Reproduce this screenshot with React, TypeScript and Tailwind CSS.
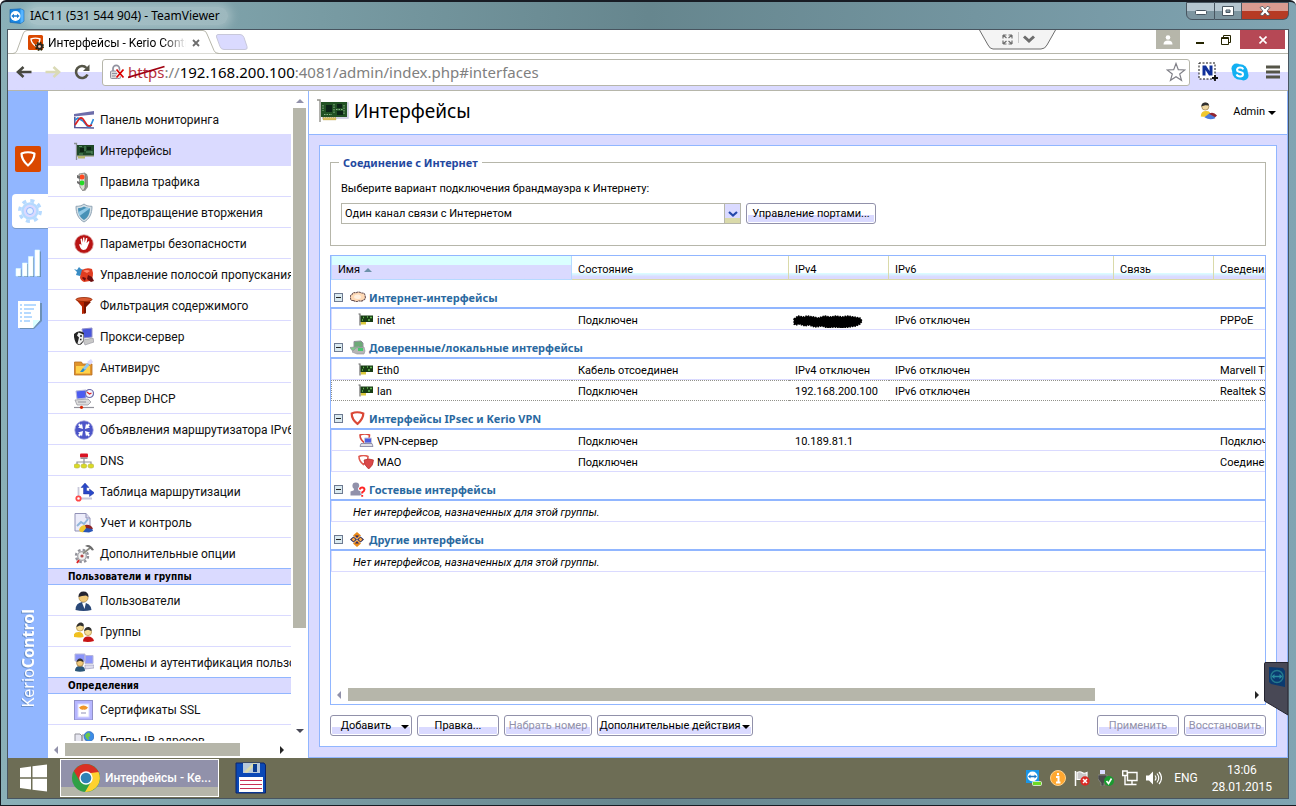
import type { ReactNode } from 'react';

/* ---------- Window chrome icons ---------- */

function TeamViewerIcon({ className }: { className: string }) {
  return (
    <svg className={className} viewBox="0 0 16 16" aria-hidden="true">
      <path d="M1 1.500 11.500.8l3.500 1.600v10.800l-3.500 2.300L1 14.300z" fill="#1a86e0" stroke="#0b5cad" strokeWidth=".6" />
      <path d="M11.500 1l3 1.500v10.700l-3 2z" fill="#4cb0ff" />
      <circle cx="6.500" cy="8" r="5" fill="#fff" />
      <path d="M2.300 8l2.700-2.200v1.400h3V5.800L10.700 8 8 10.200V8.800H5v1.400z" fill="#1a7ad0" />
    </svg>
  );
}

function KerioFavicon() {
  return (
    <svg className="size-4 shrink-0" viewBox="0 0 16 16" aria-hidden="true">
      <rect width="15" height="15" rx="1.500" fill="#da4800" />
      <path d="M3 4q4.500-1.700 9 0-.3 4-4.500 7Q3.300 8 3 4z" fill="none" stroke="#fff" strokeWidth="1.400" />
      <circle cx="11.500" cy="11.500" r="3.700" fill="none" stroke="#242400" strokeWidth="1.600" strokeDasharray="1.600 1.300" />
      <circle cx="11.500" cy="11.500" r="2.300" fill="none" stroke="#242424" strokeWidth="1.700" />
      <circle cx="11.500" cy="11.500" r="1.300" fill="#dadada" />
    </svg>
  );
}

function BrokenLock() {
  return (
    <svg className="size-4 shrink-0" viewBox="0 0 16 16" aria-hidden="true">
      <path d="M4 7V4.500a3.200 3.200 0 0 1 6.400 0V7" fill="none" stroke="#91919f" strokeWidth="1.700" />
      <rect x="1.500" y="7" width="10" height="7.500" rx="1" fill="#dadada" stroke="#91919f" />
      <path d="M3 9.500h5M3 12h5" stroke="#91919f" />
      <path d="M7.500 5.500l7 8M14.500 5.500l-7 8" stroke="#fff" strokeWidth="3" />
      <path d="M7.500 5.500l7 8M14.500 5.500l-7 8" stroke="#da0000" strokeWidth="1.800" />
    </svg>
  );
}

/* ---------- Navigation icons ---------- */

function Icon({ children }: { children: ReactNode }) {
  return (
    <svg className="size-5 shrink-0" viewBox="0 0 20 20" aria-hidden="true">
      {children}
    </svg>
  );
}

const DashboardIcon = () => (
  <Icon>
    <path d="M0 4l20-3v3.500L0 6.500z" fill="#6d6daa" />
    <path d="M.8 7v10M0 17.500l20 .5" stroke="#5a5a9a" strokeWidth="1.600" fill="none" />
    <path d="M1 10l3-2 5 3 5 6h2l3.500-8" fill="none" stroke="#2a8cda" strokeWidth="1.700" />
    <path d="M1 15l4-6q2-2 4 0l4 6 2 1 3-1" fill="none" stroke="#da2424" strokeWidth="1.700" />
  </Icon>
);

const CardIcon = () => (
  <Icon>
    <path d="M0 2.500h2.500V19" fill="none" stroke="#8a9191" strokeWidth="1.300" />
    <path d="M3 4h17v11H3z" fill="#1f4828" />
    <path d="M3 14.500h17v1.500H3z" fill="#b6b6aa" />
    <path d="M4 15h7v2.500H4z" fill="#b6b66d" />
    <path d="M6 7h4v4H6zM13 6h4v3h-4z" fill="#0c2412" />
    <path d="M12 11h6M5 13h4M11 5v5M18 10v3M5 5.500h3" stroke="#5a9164" strokeWidth="1" />
  </Icon>
);

const TrafficIcon = () => (
  <Icon>
    <path d="M10 1l3 1 1 3v10l-3 4-2-1z" fill="#91918a" />
    <path d="M5 2l6-1v15l-2 3-3-4z" fill="#dadad0" stroke="#6d6d6d" strokeWidth=".7" />
    <circle cx="8" cy="5" r="2.500" fill="#ff4820" />
    <circle cx="8" cy="11" r="2.400" fill="#24da24" />
    <path d="M3 3l3 1v3L3 6zM3 9l3 1v3l-3-2z" fill="#6d6d6d" />
  </Icon>
);

const ShieldIcon = () => (
  <Icon>
    <path d="M10 1c2.500 2 5 2.300 8 2.300C18 11 15.500 16 10 19 4.500 16 2 11 2 3.300c3 0 5.500-.3 8-2.300z" fill="#d3dfe6" stroke="#91a5b6" />
    <path d="M10 3.500c2 1.300 4 1.700 6 1.700C15.800 11 14 14.500 10 17 6 14.500 4.200 11 4 5.200c2 0 4-.4 6-1.700z" fill="#4891b6" />
    <path d="M4.300 9L13 4.500l3 .8L5.500 13z" fill="#91c8e6" />
  </Icon>
);

const HandIcon = () => (
  <Icon>
    <circle cx="10" cy="10" r="9.300" fill="#b81414" stroke="#e0b0b0" strokeWidth=".8" />
    <path d="M5 10.500l1.500-.5 1 1.500L6.500 5l1.400-.4L9 8.500V3.400h1.400l.3 5L12 4l1.400.3-.8 5 1.800-2.400 1.100.8-2.500 6.300q-1 2-3.500 2-2 0-3-2z" fill="#fff" />
  </Icon>
);

const BandwidthIcon = () => (
  <Icon>
    <path d="M0 4l3 1 2-3 2 2 3 1-2 4-2 2-4-1 1-3z" fill="#3a8cc4" />
    <path d="M8 5q5-3 10-1l1 4q0 6-3 8l-6 1q-4-2-4-5z" fill="#e03c20" />
    <path d="M14 10l4 2 2 4-3 1-4-3zM9 12l3 1-1 3-3-3z" fill="#6d0f0f" />
    <path d="M9 6q4-2 7 0l-3 2z" fill="#ff8a70" />
  </Icon>
);

const FunnelIcon = () => (
  <Icon>
    <path d="M2 3.500L8 10.500V18l4-1v-6.500l6-7z" fill="#b62400" />
    <path d="M10 6h7l-5 5v6l-2 .8z" fill="#7a1400" />
    <ellipse cx="10" cy="3.500" rx="8" ry="2" fill="#da5a30" stroke="#912400" strokeWidth=".8" />
  </Icon>
);

const ProxyIcon = () => (
  <Icon>
    <path d="M8 2l10-1v9l-8 1z" fill="#4855da" stroke="#9191c8" />
    <path d="M9 13l10-2 1 4-9 3z" fill="#c8c8c8" stroke="#91919a" strokeWidth=".6" />
    <path d="M0 7q5-5 10-1v7q-2 5-5 5-4-1-5-8z" fill="#242424" />
    <path d="M4.500 5.500l5 2v6l-4 4-2-1 1.500-6-2-2z" fill="#f0f0f0" />
    <path d="M6 9h2M6 12.500h1.500" stroke="#242424" strokeWidth="1.300" />
  </Icon>
);

const AntivirusIcon = () => (
  <Icon>
    <path d="M.5 4h7l1 2H18v11H.5z" fill="#e0942a" stroke="#b66d24" strokeWidth=".8" />
    <path d="M2 8h14v7.500H2z" fill="#ffd24c" />
    <path d="M6 14l3-4 3 1-3 3z" fill="#2a8cc8" />
    <path d="M9 10l4-5 2.500 2-4.500 5z" fill="#91c8f0" />
    <path d="M13 4l4-3 2 3-3 3z" fill="#dadaff" />
  </Icon>
);

const DhcpIcon = () => (
  <Icon>
    <path d="M2 2l10-1v8L3 10z" fill="#4c5cf0" stroke="#b6b6da" />
    <path d="M1 11l13-1 3 3-3 3H3z" fill="#dcdcdc" stroke="#91919a" strokeWidth=".7" />
    <path d="M4 13h8" stroke="#91919a" />
    <circle cx="15.500" cy="4.500" r="4" fill="#f5f5ff" stroke="#6d6daa" strokeWidth="1.200" />
    <path d="M13 3l2.500 2 2-1" fill="none" stroke="#e02020" strokeWidth="1.200" />
    <path d="M0 18.500h20" stroke="#91919a" strokeWidth="1.200" />
    <circle cx="7.500" cy="18.300" r="1.600" fill="#da2400" />
  </Icon>
);

const RouterIcon = () => (
  <Icon>
    <circle cx="10" cy="10" r="9.200" fill="#4c55c8" stroke="#a0a0da" strokeWidth=".8" />
    <path d="M9 9L4 7.500l1.500-1L4 5l1.500-1.500L7 5l1-1.500zM11 9l1-5.500L13 5l1.500-1.500L16 5l-1.500 1.500 1.500 1zM9 11l-1 5.500L7 15l-1.500 1.500L4 15l1.500-1.500-1.500-1zM11 11l5 1.500-1.500 1L16 15l-1.500 1.500L13 15l-1 1.500z" fill="#fff" />
  </Icon>
);

const DnsIcon = () => (
  <Icon>
    <path d="M10 7v5M3 14v-3h14v3M10 11v3" fill="none" stroke="#91919a" strokeWidth="1.200" />
    <rect x="6" y="2.500" width="8" height="4" rx="1" fill="#da1424" />
    <path d="M6.500 7.200h7" stroke="#91919a" strokeWidth="1.500" />
    <rect x="0" y="13" width="5.800" height="4" rx="2" fill="#dada24" stroke="#b6b648" strokeWidth=".6" />
    <rect x="7" y="13" width="5.800" height="4" rx="2" fill="#dada24" stroke="#b6b648" strokeWidth=".6" />
    <rect x="14" y="13" width="5.800" height="4" rx="2" fill="#dada24" stroke="#b6b648" strokeWidth=".6" />
  </Icon>
);

const RoutingIcon = () => (
  <Icon>
    <path d="M4.500 5v11.500H18" fill="none" stroke="#c8c8da" strokeWidth="1.800" />
    <path d="M11 1l4 4.500h-2.500v3.200l3 .5V7l5 4-5 3.500V12H9.500V5.500H7z" fill="#2a48c8" stroke="#1a2a91" strokeWidth=".4" />
    <circle cx="4.500" cy="16.500" r="2.200" fill="#fff" stroke="#ff4848" strokeWidth="1.800" />
  </Icon>
);

const AccountingIcon = () => (
  <Icon>
    <path d="M1 .5h11L16 5v13H1z" fill="#ececfa" stroke="#9191b6" />
    <path d="M3 13l4-4 3 2 4-5" fill="none" stroke="#91b6da" strokeWidth="2" />
    <path d="M12 .5V5h4" fill="#dadaf0" stroke="#9191b6" />
    <path d="M5 17q1-5 7-5l1 4-3 3q-4 1-5-2z" fill="#f0c830" />
    <path d="M9 19l4-5 5 1 1 3-4 1.500z" fill="#2a55b6" />
    <path d="M11 12q6-1 8 4l-7-1z" fill="#912424" />
  </Icon>
);

const OptionsIcon = () => (
  <Icon>
    <circle cx="8" cy="12" r="6" fill="none" stroke="#91919a" strokeWidth="2.400" strokeDasharray="2.500 2.200" />
    <circle cx="8" cy="12" r="4.300" fill="#f2f2f2" stroke="#a5a5aa" strokeWidth="1.300" />
    <circle cx="8" cy="12" r="1.600" fill="#b64848" />
    <path d="M9 9.500L16 4" stroke="#8a8a80" strokeWidth="1.600" />
    <path d="M11 2q5-3 9 4l-2 .5-3-3z" fill="#6d6d6d" />
    <path d="M3 19l2-3" stroke="#da2424" strokeWidth="2" />
  </Icon>
);

const UserIcon = () => (
  <Icon>
    <path d="M1.500 19q0-7 6.500-8 9 1 9.500 8-8 2-16 0z" fill="#2a4878" />
    <path d="M8 11.500h4L10.500 18z" fill="#fff" />
    <circle cx="9.500" cy="6.500" r="4.600" fill="#f0c878" stroke="#a07830" strokeWidth=".6" />
    <path d="M4.500 6q0-5.500 5-5.500 5 0 5 5.500L12 4.500 8 5z" fill="#242430" />
  </Icon>
);

const GroupIcon = () => (
  <Icon>
    <path d="M-.5 15q0-5 5-5t5 5q-5 1-10 0z" fill="#f0c020" />
    <circle cx="6" cy="5.500" r="3.600" fill="#f5dc96" stroke="#a07830" strokeWidth=".6" />
    <path d="M2.500 5q1-5 5-4.500 3 1 2 4L6 3.500z" fill="#303030" />
    <path d="M9 19.500q0-5 5-5t6 4.500q-5 1.500-11 .5z" fill="#c81414" />
    <circle cx="14" cy="10" r="3.600" fill="#f5dc96" stroke="#a07830" strokeWidth=".6" />
    <path d="M10 9q1-4.500 5-4 3 1 2.500 4L14 7.800z" fill="#303030" />
  </Icon>
);

const DomainIcon = () => (
  <Icon>
    <path d="M1 1h10v7H1zM11 2.500h8v8h-8z" fill="#8c96fa" stroke="#b6b6da" />
    <path d="M11 12h9v3l-9 1z" fill="#dcdcec" stroke="#9191b6" strokeWidth=".6" />
    <path d="M1 18q0-5 5-5t5 5q-5 1.500-10 0z" fill="#2a5578" />
    <circle cx="6" cy="10" r="3.400" fill="#f0c878" stroke="#806030" strokeWidth=".6" />
    <path d="M2.500 9q1-4 4-3.500 3 .5 3 3.500L6 7.800z" fill="#303030" />
  </Icon>
);

const CertificateIcon = () => (
  <Icon>
    <rect x=".5" y=".5" width="18" height="19.500" fill="#b6b6ff" stroke="#9191c8" />
    <rect x="4" y="4" width="11" height="13" fill="#fff" stroke="#dadaff" />
    <path d="M5 7.500q4.500-4 9 0-2 3-4.500 2Q7 10.500 5 7.500z" fill="#f0962a" />
    <path d="M7 13h5" stroke="#9191b6" />
  </Icon>
);

const AddressIcon = () => (
  <Icon>
    <path d="M1 3h5l2 2v12H1zM8 4h4v13H8z" fill="#e6e6f0" stroke="#91919a" />
    <circle cx="15" cy="5.500" r="5" fill="#3c8ce6" stroke="#2a64b6" strokeWidth=".6" />
    <path d="M12 3q3-3 4 0t-2 3q2 1 1 3-3-1-4-4z" fill="#6dc848" />
  </Icon>
);

/* ---------- Table icons ---------- */

function SmallIcon({ children }: { children: ReactNode }) {
  return (
    <svg className="size-4 shrink-0" viewBox="0 0 16 16" aria-hidden="true">
      {children}
    </svg>
  );
}

const NicIcon = () => (
  <SmallIcon>
    <path d="M.5 1H2v11.500" fill="none" stroke="#6d6d6d" strokeWidth="1.200" />
    <path d="M2.500 2.500H15v6.500H2.500z" fill="#183c14" />
    <path d="M3 9h5v2.500H3z" fill="#dac83c" />
    <path d="M5 4.500h1M9 4h1M12 4.500h2M10 7h2M4 7h1" stroke="#64b650" strokeWidth="1.500" />
  </SmallIcon>
);

const CloudIcon = () => (
  <SmallIcon>
    <path d="M3.500 10.500Q.5 10.800.5 8-.3 5.500 2 4.500 3 2 6 2.800q3-1.600 5 .2 4-.5 4 2.800 1.300 3-1.600 4.200-2 1.800-4.400.8-3 1.500-5.500-.3z" fill="#ffdab6" stroke="#6d5555" strokeDasharray="2.200 .5" strokeWidth="1.100" />
    <path d="M4 7q0-2.500 3.500-2.500T11 7 7.500 9 4 7z" fill="#fff0e0" />
  </SmallIcon>
);

const TrustedIcon = () => (
  <SmallIcon>
    <path d="M4 1.500l7-.5 2 2v4.500H4z" fill="#6daa78" stroke="#91919a" />
    <path d="M0 7.500l9-1 1 3-8 1z" fill="#82c88c" stroke="#91919a" strokeWidth=".7" />
    <path d="M6 8l8-1 1 4-1 3H7l-5-2z" fill="#b6b6b6" stroke="#91919a" strokeWidth=".6" />
    <path d="M8 8h5v3H8z" fill="#48c86d" />
  </SmallIcon>
);

const RedShield = () => (
  <SmallIcon>
    <path d="M1.700 2.500q5.300-2.500 11.600 0 0 5.500-5.800 10.300-5.800-4.300-5.800-10.300z" fill="#fff" stroke="#da4836" strokeWidth="2.200" />
  </SmallIcon>
);

const VpnServerIcon = () => (
  <SmallIcon>
    <path d="M2 1q5-2 9.500 0 0 5-4.500 8Q2 6 2 1z" fill="#fff" stroke="#da483c" strokeWidth="1.600" />
    <path d="M6.500 4h7v5h-7z" fill="#4c5ce0" stroke="#c8c8da" />
    <path d="M3 9.500h11l1 3H2z" fill="#e0e0e6" stroke="#6d6d91" strokeWidth=".7" />
  </SmallIcon>
);

const VpnTunnelIcon = () => (
  <SmallIcon>
    <path d="M1 1.500q4.500-2 9 0 0 5-4.500 8Q1 6.500 1 1.500z" fill="#fff" stroke="#e05a50" strokeWidth="1.600" />
    <path d="M6 5q5-2 9.500 0 0 5.500-4.800 9Q6 10.500 6 5z" fill="#da4848" stroke="#b63030" strokeWidth=".7" />
  </SmallIcon>
);

const GuestIcon = () => (
  <SmallIcon>
    <circle cx="5.800" cy="3.800" r="3.400" fill="#9191aa" />
    <path d="M4.500 6h3l1 2.500 3 1v4H.5v-4l3-1z" fill="#9191aa" />
    <path d="M9.700 7.500q.5-2 2.500-2t2.300 2q0 1.500-2.300 2.800v1.200M12.200 13v1.800" fill="none" stroke="#fff" strokeWidth="3.500" />
    <path d="M9.700 7.500q.5-2 2.500-2t2.300 2q0 1.500-2.300 2.800v1.200M12.200 13v1.800" fill="none" stroke="#ff2424" strokeWidth="1.900" />
  </SmallIcon>
);

const OtherIcon = () => (
  <SmallIcon>
    <path d="M7 0l4 3.500L7 7 3 3.500zM7 8l4 3.500L7 15l-4-3.500z" fill="#ea8a18" />
    <path d="M5 3.500h4L7 5.800zM5 11.500h4L7 9.200z" fill="#24246d" />
    <path d="M3.500 4.500L7 7.500l-3.500 3L0 7.500zM10.500 4.500l3.500 3-3.500 3L7 7.500z" fill="#242455" />
    <path d="M3.500 5.500L5.500 7.500l-2 2-2-2zM10.500 5.500l2 2-2 2-2-2z" fill="#ffaa48" />
  </SmallIcon>
);

/* ---------- Data ---------- */

type NavEntry = { label: string; icon: () => ReactNode };

const sections: { title?: string; items: NavEntry[] }[] = [
  {
    items: [
      { label: 'Панель мониторинга', icon: DashboardIcon },
      { label: 'Интерфейсы', icon: CardIcon },
      { label: 'Правила трафика', icon: TrafficIcon },
      { label: 'Предотвращение вторжения', icon: ShieldIcon },
      { label: 'Параметры безопасности', icon: HandIcon },
      { label: 'Управление полосой пропускания', icon: BandwidthIcon },
      { label: 'Фильтрация содержимого', icon: FunnelIcon },
      { label: 'Прокси-сервер', icon: ProxyIcon },
      { label: 'Антивирус', icon: AntivirusIcon },
      { label: 'Сервер DHCP', icon: DhcpIcon },
      { label: 'Объявления маршрутизатора IPv6', icon: RouterIcon },
      { label: 'DNS', icon: DnsIcon },
      { label: 'Таблица маршрутизации', icon: RoutingIcon },
      { label: 'Учет и контроль', icon: AccountingIcon },
      { label: 'Дополнительные опции', icon: OptionsIcon },
    ],
  },
  {
    title: 'Пользователи и группы',
    items: [
      { label: 'Пользователи', icon: UserIcon },
      { label: 'Группы', icon: GroupIcon },
      { label: 'Домены и аутентификация пользователей', icon: DomainIcon },
    ],
  },
  {
    title: 'Определения',
    items: [
      { label: 'Сертификаты SSL', icon: CertificateIcon },
      { label: 'Группы IP-адресов', icon: AddressIcon },
    ],
  },
];

type InterfaceRow = {
  name: string;
  icon: () => ReactNode;
  state: string;
  ipv4: string;
  hidden?: boolean;
  ipv6: string;
  info: string;
  focused?: boolean;
};

const groups: { title: string; icon: () => ReactNode; rows: InterfaceRow[] }[] = [
  {
    title: 'Интернет-интерфейсы',
    icon: CloudIcon,
    rows: [{ name: 'inet', icon: NicIcon, state: 'Подключен', ipv4: '', hidden: true, ipv6: 'IPv6 отключен', info: 'PPPoE' }],
  },
  {
    title: 'Доверенные/локальные интерфейсы',
    icon: TrustedIcon,
    rows: [
      { name: 'Eth0', icon: NicIcon, state: 'Кабель отсоединен', ipv4: 'IPv4 отключен', ipv6: 'IPv6 отключен', info: 'Marvell Technology' },
      { name: 'lan', icon: NicIcon, state: 'Подключен', ipv4: '192.168.200.100', ipv6: 'IPv6 отключен', info: 'Realtek Semiconductor', focused: true },
    ],
  },
  {
    title: 'Интерфейсы IPsec и Kerio VPN',
    icon: RedShield,
    rows: [
      { name: 'VPN-сервер', icon: VpnServerIcon, state: 'Подключен', ipv4: '10.189.81.1', ipv6: '', info: 'Подключено' },
      { name: 'MAO', icon: VpnTunnelIcon, state: 'Подключен', ipv4: '', ipv6: '', info: 'Соединение' },
    ],
  },
  { title: 'Гостевые интерфейсы', icon: GuestIcon, rows: [] },
  { title: 'Другие интерфейсы', icon: OtherIcon, rows: [] },
];

/* ---------- Building blocks ---------- */

function Triangle({ dir, className }: { dir: 'up' | 'down' | 'left' | 'right'; className: string }) {
  const paths = {
    up: 'M0 6l4-4 4 4z',
    down: 'M0 2h8L4 6z',
    left: 'M6 0v8L2 4z',
    right: 'M2 0v8l4-4z',
  };
  return (
    <svg className={`size-2 shrink-0 ${className}`} viewBox="0 0 8 8" aria-hidden="true">
      <path d={paths[dir]} fill="currentColor" />
    </svg>
  );
}

function PushButton({ children, disabled, menu, className }: { children: ReactNode; disabled?: boolean; menu?: boolean; className: string }) {
  return (
    <button
      type="button"
      disabled={disabled}
      className={`flex h-[21px] items-center justify-center whitespace-nowrap rounded-[3px] border border-[#9191aa] bg-white bg-linear-to-b from-white from-60% to-[#dadaff] to-60% pt-0.5 ring-1 ring-inset ring-white disabled:text-[#9191aa] ${className}`}
    >
      <span className={menu ? 'flex-1 text-center' : ''}>{children}</span>
      {menu && <Triangle dir="down" className="mr-0.5 text-black" />}
    </button>
  );
}

function TitleBar() {
  const base = 'flex items-center justify-center border border-[#485560] text-white';
  return (
    <header className="flex h-[27px] shrink-0 items-start justify-between pl-0.5">
      <div className="flex h-full items-center gap-[3px]">
        <TeamViewerIcon className="size-4" />
        <h1 className="rounded-full bg-white/25 px-0.5 pr-2 font-['Noto_Sans',sans-serif] text-[12px] text-black shadow-[0_0_8px_4px_rgba(255,255,255,0.25)]">IAC11 (531 544 904) - TeamViewer</h1>
      </div>
      <div className="flex h-[18px]">
        <button type="button" aria-label="Свернуть окно" className={`${base} w-[29px] rounded-bl-md bg-linear-to-b from-[#b6c6d0] from-50% to-[#7d95a0] to-50%`}>
          <svg className="h-2 w-3" viewBox="0 0 12 8"><rect x=".5" y="3.500" width="11" height="4" rx="1" fill="#fff" stroke="#485560" /></svg>
        </button>
        <button type="button" aria-label="Развернуть окно" className={`${base} w-[27px] border-l-0 bg-linear-to-b from-[#b6c6d0] from-50% to-[#7d95a0] to-50%`}>
          <svg className="h-2.5 w-3" viewBox="0 0 12 10"><path d="M.5.5h11v9H.5zM4 4h4v2.500H4z" fill="#fff" fillRule="evenodd" stroke="#485560" /></svg>
        </button>
        <button type="button" aria-label="Закрыть окно" className={`${base} w-[47px] rounded-br-md border-l-0 bg-linear-to-b from-[#da9a90] from-50% to-[#b63a24] to-50%`}>
          <svg className="h-2.5 w-3" viewBox="0 0 12 10"><path d="M1 1.500l2-1h1L6 3l2-2.500h1l2 1L8 5l3 3.500-2 1H8L6 7 4 9.500H3l-2-1L4 5z" fill="#fff" stroke="#485560" strokeWidth=".8" /></svg>
        </button>
      </div>
    </header>
  );
}

function TabStrip() {
  return (
    <div className="relative flex h-6 shrink-0 items-start justify-between border-b border-[#b6b6aa] bg-white">
      <div className="flex">
        <div className="relative flex h-6 w-[206px] items-center pt-0.5 pl-5">
          <svg className="absolute top-0 left-0 h-6 w-[212px]" viewBox="0 0 212 24" aria-hidden="true">
            <path d="M0 23.500h5q3 0 4-3L15 4q1-3.500 4-3.500h176q3 0 4 3.500l7 16.500q1 3 5 3" fill="#fff" stroke="#b6b6aa" />
          </svg>
          <div className="relative flex w-full items-center gap-1">
            <KerioFavicon />
            <span className="w-[138px] overflow-hidden whitespace-nowrap bg-linear-to-r from-black from-80% to-white bg-clip-text text-[12px] leading-4 text-transparent">
              Интерфейсы - Kerio Control
            </span>
            <button type="button" aria-label="Закрыть вкладку" className="ml-0.5">
              <svg className="size-2" viewBox="0 0 8 8"><path d="M1 1l6 6M7 1L1 7" stroke="#6d6d6d" strokeWidth="1.800" /></svg>
            </button>
          </div>
        </div>
        <button type="button" aria-label="Новая вкладка" className="mt-1 ml-0.5 h-4 w-8">
          <svg viewBox="0 0 32 16"><path d="M2 .5h22q3 0 4 3l3 9q1 3-2 3H8q-3 0-4-3L.5 3Q0 .5 2 .5z" fill="#dadaff" stroke="#c8c8da" /></svg>
        </button>
      </div>
      <div className="absolute top-0 right-[232px]">
        <svg className="h-5 w-[77px]" viewBox="0 0 77 20" aria-hidden="true">
          <path d="M.5 0L9 15q2 4 5 4h48q4 0 6-4l8.500-15" fill="#f4f4f4" stroke="#6d6d6d" />
          <path d="M39.500 2v11" stroke="#c8c8c8" />
          <path d="M24 5h3.500M24 5v3.500M24 5l3.500 3M33 5h-3.500M33 5v3.500M33 5l-3.500 3M24 14h3.500M24 14v-3.500M24 14l3.500-3M33 14h-3.500M33 14v-3.500M33 14l-3.500-3" stroke="#6d6d6d" strokeWidth="1.200" />
          <path d="M45 6.500l5 4.500 5-4.500" fill="none" stroke="#6d6d6d" strokeWidth="3" />
        </svg>
      </div>
      <div className="flex h-[19px] items-stretch pr-[3px]">
        <button type="button" aria-label="Профиль" className="mr-2 flex w-6 items-center justify-center bg-[#b6b6aa]">
          <svg className="size-2.5" viewBox="0 0 10 10"><circle cx="5" cy="2.500" r="2.300" fill="#fff" /><path d="M.5 9.500q0-4 4.500-4t4.500 4z" fill="#fff" /></svg>
        </button>
        <button type="button" aria-label="Свернуть" className="flex w-6 items-center justify-center"><span className="mt-1.5 h-0.5 w-2 bg-[#242400]" /></button>
        <button type="button" aria-label="Восстановить" className="flex w-7 items-center justify-center">
          <svg className="size-2.5" viewBox="0 0 10 10"><path d="M.5 2.500h7v7h-7zM.5 3.500h7M2.500 2.500v-2h7v7h-2" fill="none" stroke="#242400" /></svg>
        </button>
        <button type="button" aria-label="Закрыть" className="flex w-[45px] items-center justify-center bg-[#b64855]">
          <svg className="size-2" viewBox="0 0 8 8"><path d="M.5.5l7 7M7.500.5l-7 7" stroke="#fff" strokeWidth="1.600" /></svg>
        </button>
      </div>
    </div>
  );
}

function Toolbar() {
  return (
    <div className="flex h-[37px] shrink-0 items-center border-b border-[#b6b6aa] bg-white bg-linear-to-b from-white from-50% to-[#dadaff] to-50% px-2">
      <div className="flex w-[86px] items-center gap-[13px]">
        <button type="button" aria-label="Назад"><svg className="size-4" viewBox="0 0 16 16"><path d="M15.500 8H2.500M7.500 3L2 8l5.500 5" fill="none" stroke="#484840" strokeWidth="2.600" /></svg></button>
        <button type="button" aria-label="Вперёд"><svg className="size-4" viewBox="0 0 16 16"><path d="M.5 8h13M8.500 3L14 8l-5.500 5" fill="none" stroke="#dadab6" strokeWidth="2.600" /></svg></button>
        <button type="button" aria-label="Обновить"><svg className="size-4" viewBox="0 0 16 16"><path d="M13.500 10.500A6 6 0 1 1 12.500 4" fill="none" stroke="#555548" strokeWidth="2.600" /><path d="M9 7h6.500V.5z" fill="#555548" /></svg></button>
      </div>
      <form className="flex h-[27px] min-w-0 flex-1 items-center rounded-[3px] border border-[#b6b6aa] bg-white pr-[3px] pl-1.5 font-['Noto_Sans',sans-serif] text-[15px] leading-5 text-[#808080]">
        <BrokenLock />
        <label htmlFor="address" className="ml-[3px] flex shrink-0">
          <span className="relative text-[#b63040]">
            https
            <svg className="absolute top-0 left-0 h-5 w-full" viewBox="0 0 36 20" preserveAspectRatio="none" aria-hidden="true"><path d="M0 15.500L36 4.500" stroke="#a00010" strokeWidth="1.800" /></svg>
          </span>
          ://<span className="text-black">192.168.200.100</span>
        </label>
        <input id="address" aria-label="Адрес" className="min-w-0 flex-1 bg-transparent outline-none" defaultValue=":4081/admin/index.php#interfaces" />
        <button type="button" aria-label="Добавить в закладки">
          <svg className="size-5" viewBox="0 0 20 20"><path d="M10 1.500l2.300 6.200 6.500.3-5.100 4 1.800 6.300L10 14.700l-5.500 3.600L6.300 12l-5.100-4 6.500-.3z" fill="#fff" stroke="#808088" strokeWidth="1.200" /></svg>
        </button>
      </form>
      <div className="ml-2 flex items-center gap-[13px]">
        <button type="button" aria-label="Расширение N">
          <svg className="size-5" viewBox="0 0 20 20"><rect x="1" y="1" width="16" height="16" fill="#fff" stroke="#111" strokeDasharray="2 1.500" /><path d="M4.500 13.500V3.500H8l3.500 5.500V3.500h3v10H11L7.500 8v5.500z" fill="#10309a" /><path d="M17 13v6M14 16h6" stroke="#111" strokeWidth="1.800" /></svg>
        </button>
        <button type="button" aria-label="Skype">
          <svg className="size-[18px]" viewBox="0 0 18 18"><circle cx="9" cy="9" r="7.800" fill="#12b0f2" /><circle cx="5.500" cy="5.500" r="5" fill="#12b0f2" /><circle cx="12.500" cy="12.500" r="5" fill="#12b0f2" /><path d="M12.300 6.300Q11.500 4.500 9 4.500T6 6.700q0 1.800 3 2.200t3 2.300q0 2.200-3 2.200-2.700 0-3.400-2" fill="none" stroke="#fff" strokeWidth="2" /></svg>
        </button>
        <button type="button" aria-label="Меню" className="ml-1"><svg className="h-[14px] w-[14px]" viewBox="0 0 14 14"><path d="M0 2h14M0 7h14M0 12h14" stroke="#555548" strokeWidth="3" /></svg></button>
      </div>
    </div>
  );
}

function ProductRail() {
  return (
    <aside className="flex w-10 shrink-0 flex-col items-center bg-[#91b6ff] pt-[55px]">
      <svg className="size-[26px]" viewBox="0 0 26 26" aria-label="Kerio">
        <rect width="26" height="26" rx="2" fill="#da4800" />
        <path d="M6.500 7.500Q13 5 19.500 7.500 19.500 14 13 19.500 6.500 14 6.500 7.500z" fill="none" stroke="#fff" strokeWidth="2.200" strokeLinejoin="round" />
      </svg>
      <button type="button" aria-label="Настройка" className="mt-[22px] flex h-[34px] w-9 items-center justify-center self-end rounded-l-[4px] bg-white shadow-[0_1px_0_#7a9ac8]">
        <svg className="size-[26px]" viewBox="0 0 26 26">
          <circle cx="13" cy="13" r="10.300" fill="none" stroke="#b6daff" strokeWidth="3.400" strokeDasharray="4 4.090" />
          <circle cx="13" cy="13" r="7.500" fill="#dadaff" stroke="#b6daff" strokeWidth="2.500" />
          <circle cx="13" cy="13" r="3.500" fill="#e8f2ff" stroke="#91b6ff" strokeWidth="1" />
        </svg>
      </button>
      <button type="button" aria-label="Состояние" className="mt-5">
        <svg className="h-[30px] w-7" viewBox="0 0 28 30">
          <path d="M4 21.500h3.500V29H4zM10 16h4v13h-4zM16 9.500h4V29h-4zM23 3.500h4V29h-4z" fill="#6d91b6" />
          <path d="M2 20.500h4.500V28H2zM8.500 15H13v13H8.500zM14.500 8.500H19V28h-4.500zM21 2h4.500v26H21z" fill="#fff" stroke="#daffff" strokeWidth=".6" />
        </svg>
      </button>
      <button type="button" aria-label="Журналы" className="mt-[22px] ml-1">
        <svg className="h-[30px] w-7" viewBox="0 0 28 30">
          <path d="M4 3h22v18l-8 8H4z" fill="#6d91b6" />
          <path d="M2 1h22v19l-7 8H2z" fill="#fff" />
          <path d="M17 28l7-8h-7z" fill="#daffff" />
          <path d="M4 5h2M4 9h2M4 13h2M4 17h2M4 21h2M8 5h12M8 9h10M8 13h7M8 17h8M8 21h6" stroke="#b6daff" strokeWidth="2" />
        </svg>
      </button>
      <div className="mt-auto mb-[50px] rotate-180 font-['Noto_Sans',sans-serif] text-[16px] leading-5 text-white [text-shadow:-1px_-1px_0_#6d91c8] [writing-mode:vertical-rl]">
        Kerio<b>Control</b>
      </div>
    </aside>
  );
}

function Navigation() {
  return (
    <div className="flex w-[260px] shrink-0 flex-col bg-white">
      <div className="flex min-h-0 flex-1">
        <nav aria-label="Разделы" className="w-[243px] overflow-hidden pt-[13px]">
          {sections.map((section, s) => (
            <section key={section.title ?? 'main'}>
              {section.title && (
                <h2 className="flex h-4 items-center border-b border-[#91b6ff] bg-[#dadaff] pl-5 font-['DejaVu_Sans_Condensed','DejaVu_Sans',sans-serif] text-[10px] font-bold text-black">{section.title}</h2>
              )}
              <ul>
                {section.items.map((item, i) => {
                  const last = i === section.items.length - 1 && s < sections.length - 1;
                  const active = item.label === 'Интерфейсы';
                  return (
                    <li key={item.label}>
                      <a
                        href={`#${item.label}`}
                        aria-current={active ? 'page' : undefined}
                        className={`flex h-[31px] items-center gap-1.5 border-b pt-0.5 pl-[26px] text-[12px] whitespace-nowrap text-[#111] ${last ? 'border-[#91b6ff]' : 'border-[#dadaff]'} ${active ? 'bg-[#dadaff]' : ''}`}
                      >
                        <item.icon />
                        {item.label}
                      </a>
                    </li>
                  );
                })}
              </ul>
            </section>
          ))}
        </nav>
        <div className="flex w-[17px] flex-col items-center py-1.5">
          <Triangle dir="up" className="text-[#9191aa]" />
          <div className="mt-[3px] flex w-[13px] flex-1 flex-col">
            <div className="h-[84%] bg-[#b6b6aa]" />
          </div>
          <Triangle dir="down" className="text-[#484855]" />
        </div>
      </div>
      <div className="flex h-[17px] items-center pr-[22px] pl-1">
        <Triangle dir="left" className="text-[#9191aa]" />
        <div className="mx-[5px] flex-1">
          <div className="h-[13px] w-[84%] bg-[#b6b6aa]" />
        </div>
        <Triangle dir="right" className="text-[#242424]" />
      </div>
    </div>
  );
}

function ConnectionFieldset() {
  return (
    <fieldset className="h-[90px] border border-[#b6b6aa] px-2.5">
      <legend className="ml-[-2px] px-1 font-['Noto_Sans',sans-serif] leading-[13px] font-bold text-[#2448a0]">Соединение с Интернет</legend>
      <label htmlFor="mode" className="mt-3 block h-[22px] leading-4">Выберите вариант подключения брандмауэра к Интернету:</label>
      <div className="flex gap-[5px]">
        <div className="relative h-[21px] w-[400px]">
          <select id="mode" className="h-full w-full appearance-none border border-[#b6b6aa] bg-white px-[3px] pt-0.5 outline-none">
            <option>Один канал связи с Интернетом</option>
          </select>
          <span className="pointer-events-none absolute inset-y-px right-px flex w-4 items-center justify-center border-l border-[#b6b6aa] bg-linear-to-b from-[#dadaff] from-75% to-[#dadaaa] to-75%">
            <svg className="h-1.5 w-2.5" viewBox="0 0 10 6"><path d="M1 1l4 3.500L9 1" fill="none" stroke="#2448aa" strokeWidth="2.200" /></svg>
          </span>
        </div>
        <PushButton className="w-[130px]">Управление портами...</PushButton>
      </div>
    </fieldset>
  );
}

function HeaderCell({ children }: { children: ReactNode }) {
  return (
    <th scope="col" className="border-r border-b border-[#dadaaa] bg-linear-to-b from-white from-75% via-[#daffff] via-75% to-[#dadaff] to-90% px-1.5 pt-1 text-left font-normal whitespace-nowrap">
      {children}
    </th>
  );
}

function InterfacesTable() {
  return (
    <div className="mt-[9px] flex min-h-0 flex-1 flex-col border border-[#91b6ff]">
      <div className="min-h-0 flex-1 overflow-hidden">
        <table className="w-[1100px] table-fixed border-separate border-spacing-0 leading-4">
          <colgroup>
            <col className="w-[241px]" />
            <col className="w-[217px]" />
            <col className="w-[100px]" />
            <col className="w-[225px]" />
            <col className="w-[100px]" />
            <col />
          </colgroup>
          <thead>
            <tr className="h-6">
              <th scope="col" aria-sort="ascending" className="border-x border-b border-[#b6daff] bg-linear-to-b from-[#daffff] from-40% to-[#dadaff] to-40% px-1.5 pt-1 text-left font-normal">
                <span className="flex items-center gap-1">
                  Имя <Triangle dir="up" className="text-[#6d91aa]" />
                </span>
              </th>
              <HeaderCell>Состояние</HeaderCell>
              <HeaderCell>IPv4</HeaderCell>
              <HeaderCell>IPv6</HeaderCell>
              <HeaderCell>Связь</HeaderCell>
              <HeaderCell>Сведения</HeaderCell>
            </tr>
          </thead>
          {groups.map((group) => (
            <tbody key={group.title}>
              <tr className="h-[29px]">
                <th colSpan={6} scope="colgroup" className="border-b-2 border-[#91b6ff] pt-2 text-left font-['Noto_Sans',sans-serif] text-[#2a69a0]">
                  <span className="flex h-4 items-center pl-[3px]">
                    <button type="button" aria-label="Свернуть группу">
                      <svg className="block size-[9px]" viewBox="0 0 9 9"><rect x=".5" y=".5" width="8" height="8" fill="#daeaf0" stroke="#6d7a91" /><path d="M2 4.500h5" stroke="#242424" /></svg>
                    </button>
                    <span className="mr-[3px] ml-[7px] flex"><group.icon /></span>
                    {group.title}
                  </span>
                </th>
              </tr>
              {group.rows.length === 0 && (
                <tr className="h-[21px]">
                  <td colSpan={6} className="border-b border-l border-[#dadaff] pt-[3px] pl-[21px] italic">Нет интерфейсов, назначенных для этой группы.</td>
                </tr>
              )}
              {group.rows.map((row) => {
                const line = row.focused ? 'border-y border-dotted border-[#91918a] pt-[3px]' : 'border-b border-[#dadaff] pt-[3px]';
                return (
                  <tr key={row.name} className="h-[21px] whitespace-nowrap">
                    <td className={`${line} border-l pl-6`}>
                      <span className="flex items-center gap-[3px] pl-0.5"><row.icon />{row.name}</span>
                    </td>
                    <td className={`${line} px-1.5`}>{row.state}</td>
                    <td className={`${line} px-1.5`}>
                      {row.ipv4}
                      {row.hidden && (
                        <svg className="-ml-0.5 block h-3.5 w-[70px]" viewBox="0 0 70 14" aria-hidden="true">
                          <path d="M1 5l4-3 6 1 3-1 7 1 4 1 7-2 5 1 6-1 6 1 6-1 6 1 6 1 2 3-2 3-4 2-7 1-7 1-8-1-6 1-6-2-7 1-6-2-4 1-6-2-3 1-2-1z" stroke="#000" strokeWidth="1.500" strokeDasharray="1.500 1" />
                        </svg>
                      )}
                    </td>
                    <td className={`${line} px-1.5`}>{row.ipv6}</td>
                    <td className={line} />
                    <td className={`${line} px-1.5`}>{row.info}</td>
                  </tr>
                );
              })}
            </tbody>
          ))}
        </table>
      </div>
      <div className="flex h-[19px] shrink-0 items-center px-1">
        <Triangle dir="left" className="text-[#9191aa]" />
        <div className="mx-[5px] flex-1"><div className="h-[13px] w-[83%] bg-[#b6b6aa]" /></div>
        <Triangle dir="right" className="text-[#242424]" />
      </div>
    </div>
  );
}

function MainPane() {
  return (
    <main className="flex min-w-0 flex-1 flex-col border-x border-b border-[#91b6ff] bg-[#dadaff]">
      <div className="flex h-11 shrink-0 items-center border-b border-[#91b6ff] bg-white pr-[11px] pb-1 pl-2">
        <svg className="h-6 w-8" viewBox="0 0 32 24" aria-hidden="true">
          <path d="M0 1h3v22" fill="none" stroke="#91918a" strokeWidth="1.400" />
          <path d="M4 3h26v15H4z" fill="#225224" />
          <path d="M30 4h1v15H5" fill="none" stroke="#c8c8e0" strokeWidth="1.500" />
          <path d="M6 18.500h13V21H6z" fill="#dac060" stroke="#b69a48" strokeWidth=".6" strokeDasharray="1 1" />
          <path d="M9 6h6v7H9zM20 5h5v4h-5zM20 12h6v4h-6z" fill="#0c2418" />
          <path d="M6 6v6M17 5v9M27 6v9M7 15.500h8M19 10.500h7" stroke="#8ab68a" strokeDasharray="1.500 1" />
        </svg>
        <h2 className="ml-[5px] flex-1 font-['Noto_Sans',sans-serif] text-[19px] leading-6 text-black">Интерфейсы</h2>
        <svg className="mr-4 size-[18px]" viewBox="0 0 20 20" aria-hidden="true">
          <path d="M2 16q0-6 6-6t4 6q-5 1-10 0z" fill="#f0c830" />
          <circle cx="7" cy="5" r="4" fill="#f0d8a0" stroke="#806030" strokeWidth=".6" />
          <path d="M2.500 5Q3 .5 7 .5T11 4L7 3.500z" fill="#303030" />
          <path d="M6 17l5-4 6 1 1 4q-6 3-12-1z" fill="#4c7ada" />
          <path d="M11 13q5-3 9 2l-2 2z" fill="#912430" />
        </svg>
        <button type="button" className="flex items-center gap-[3px] pt-1">
          Admin <Triangle dir="down" className="text-black" />
        </button>
      </div>
      <div className="m-[10px] flex min-h-0 flex-1 flex-col border border-[#91b6ff] bg-white p-[10px]">
        <ConnectionFieldset />
        <InterfacesTable />
        <div className="mt-[10px] flex gap-[5px]">
          <PushButton menu className="w-[82px]">Добавить</PushButton>
          <PushButton className="w-[82px]">Правка...</PushButton>
          <PushButton disabled className="w-[88px]">Набрать номер</PushButton>
          <PushButton menu className="w-[156px]">Дополнительные действия</PushButton>
          <PushButton disabled className="ml-auto w-[82px]">Применить</PushButton>
          <PushButton disabled className="w-[82px]">Восстановить</PushButton>
        </div>
      </div>
    </main>
  );
}

function Taskbar() {
  return (
    <footer className="flex h-10 shrink-0 items-center bg-[#6d6d55] text-[12px] text-white">
      <button type="button" aria-label="Пуск" className="ml-3">
        <svg className="size-7" viewBox="0 0 28 28"><path d="M0 4l11-1.500v10.800H0zM12.500 2.300L27 .5v12.800H12.500zM0 14.700h11v10.800L0 24zM12.500 14.700H27v12.800l-14.500-1.800z" fill="#fff" /></svg>
      </button>
      <button type="button" className="ml-3 flex h-[38px] w-[159px] items-center gap-1 border border-white bg-linear-to-b from-[#9191aa] from-76% to-[#b6b6aa] to-76% pl-2.5 font-medium whitespace-nowrap">
        <svg className="size-[30px] shrink-0" viewBox="0 0 30 30" aria-hidden="true">
          <circle cx="15" cy="15" r="14" fill="#30a046" />
          <path d="M2.900 8A14 14 0 0 1 27.100 8L28 10H15L8.700 18z" fill="#da3024" />
          <path d="M27.500 9A14 14 0 0 1 14 29l6.500-11L20 10z" fill="#ffd230" />
          <circle cx="15" cy="15" r="6.700" fill="#fff" />
          <circle cx="15" cy="15" r="5.300" fill="#3082b6" />
        </svg>
        <span>Интерфейсы - Ке...</span>
      </button>
      <button type="button" aria-label="Файловый менеджер" className="ml-4">
        <svg className="h-8 w-[31px]" viewBox="0 0 31 32">
          <path d="M1 1h28l1.500 2v28H1z" fill="#0a48b6" stroke="#0a246d" />
          <path d="M8 1h17v10H8z" fill="#b6c8da" /><path d="M9 10l9-9h4L12 11z" fill="#dadaaa" /><path d="M18 2h4v8h-4z" fill="#0a3c91" />
          <path d="M4 15h24v15H4z" fill="#fff" />
          <path d="M5 18.500h22M5 22.500h22M5 26.500h22" stroke="#c83055" strokeWidth="1.200" />
        </svg>
      </button>
      <div className="ml-auto flex items-center gap-2">
        <svg className="size-4" viewBox="0 0 16 16" aria-hidden="true"><rect width="13" height="13" fill="#1a96e8" /><circle cx="6.500" cy="6.500" r="5" fill="#fff" /><path d="M2 6.500l2.500-2v1.300h4V4.500l2.500 2-2.500 2V7.200h-4v1.300z" fill="#1a78c8" /><rect x="6.500" y="11.500" width="9" height="4" rx="1" fill="#6dda24" stroke="#fff" strokeWidth=".7" /></svg>
        <svg className="size-4" viewBox="0 0 16 16" aria-hidden="true"><circle cx="8" cy="8" r="7.500" fill="#ffa830" stroke="#ffd28c" /><path d="M8 3v2.200M6 7h2.500v5M6 12.500h4.500" stroke="#fff" strokeWidth="2" fill="none" /></svg>
        <svg className="size-4" viewBox="0 0 16 16" aria-hidden="true"><path d="M1.500 1v15" stroke="#fff" strokeWidth="1.500" /><path d="M3 2.500q3-1.500 5 0t5 0v7H3z" fill="#c8c8c8" stroke="#fff" strokeWidth="1.200" /><circle cx="11" cy="11" r="4.700" fill="#da2a24" /><path d="M9 9l4 4M13 9l-4 4" stroke="#fff" strokeWidth="1.500" /></svg>
        <svg className="size-4" viewBox="0 0 16 16" aria-hidden="true"><path d="M2 0h5v4H2z" fill="#dadaff" /><path d="M0 5h9v4l-3 4v3H3v-3L0 9z" fill="#48484a" stroke="#91918a" strokeWidth=".7" /><circle cx="11" cy="11" r="5" fill="#1a9a30" /><path d="M8.500 11l2 2.500 3-5" fill="none" stroke="#fff" strokeWidth="1.600" /></svg>
        <svg className="size-4" viewBox="0 0 16 16" aria-hidden="true"><path d="M5.500 2.500H15v8H5.500zM10 10.500v4M6 14.500h8.500M.7 1h4.500v4.500H.7zM3 5.500v9h3" fill="none" stroke="#fff" strokeWidth="1.400" /></svg>
        <svg className="size-4" viewBox="0 0 16 16" aria-hidden="true"><path d="M0 5.500h3L7 1.500v13L3 10.500H0z" fill="#fff" /><path d="M9 5.500q2 2.500 0 5M11 3.500q3.500 4.500 0 9M13 2q5 6 0 12" fill="none" stroke="#fff" strokeWidth="1.200" /></svg>
        <span className="ml-1">ENG</span>
      </div>
      <time className="mt-0.5 mr-4 ml-3.5 text-center leading-[17px]">
        13:06
        <br />
        28.01.2015
      </time>
    </footer>
  );
}

export default function App() {
  return (
    <div className="flex h-screen flex-col overflow-hidden rounded-t-md border-t-2 border-b border-l border-[#181c24] bg-linear-to-r from-[#8ab0b8] via-[#66868e] to-[#80a4b2] pr-[7px] pb-1.5 pl-1.5 font-[Roboto,sans-serif] text-[11px] text-black">
      <TitleBar />
      <div className="relative flex min-h-0 flex-1 flex-col border border-[#485560] bg-white">
        <TabStrip />
        <Toolbar />
        <div className="flex min-h-0 flex-1">
          <ProductRail />
          <Navigation />
          <MainPane />
        </div>
        <Taskbar />
        <button type="button" aria-label="Панель TeamViewer" className="absolute right-0 bottom-[82px] h-[54px] w-[25px]">
          <svg viewBox="0 0 25 54">
            <path d="M2 .5h23V53L1.500 39V2z" fill="#484855" stroke="#242430" />
            <path d="M6 5l14 1 2 3v16L8 22l-2-2z" fill="#0a3a70" />
            <circle cx="14" cy="14.500" r="6" fill="none" stroke="#24788c" strokeWidth="1.500" />
            <path d="M8.500 14.500l3-2.500v1.700h5V12l3 2.500-3 2.500v-1.700h-5V17z" fill="#2a8ca0" />
          </svg>
        </button>
      </div>
    </div>
  );
}
